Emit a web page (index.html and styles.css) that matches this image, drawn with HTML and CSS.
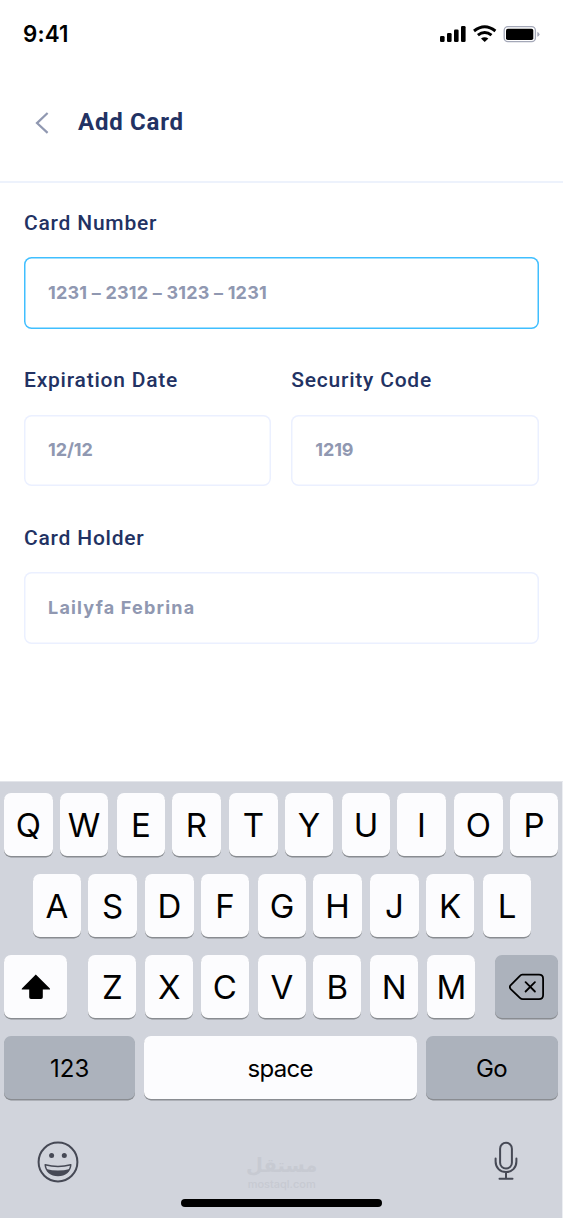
FILE: index.html
```html
<!DOCTYPE html>
<html lang="en">
<head>
<meta charset="utf-8">
<title>Add Card</title>
<link rel="stylesheet" href="styles.css">
</head>
<body>
<main class="screen">
  <div class="status">
    <span class="time">9:41</span>
    <svg class="status-icons" width="102" height="20" viewBox="0 0 102 20">
      <g fill="#000">
        <rect x="1" y="12" width="4.6" height="6" rx="1.3"/>
        <rect x="8" y="9" width="4.6" height="9" rx="1.3"/>
        <rect x="15" y="5.5" width="4.6" height="12.5" rx="1.3"/>
        <rect x="22" y="2" width="4.6" height="16" rx="1.3"/>
        <path d="M42 14.4Q45.6 12 49.4 14.4L45.7 18Z"/>
      </g>
      <path d="M35 7Q45.7-1.6 56.4 7M38.9 11.2Q45.7 5.6 52.5 11.2" fill="none" stroke="#000" stroke-width="2.9"/>
      <rect x="65.2" y="2.7" width="31.2" height="15" rx="3.7" fill="none" stroke="#a4a8b8" stroke-width="1.3"/>
      <rect x="67" y="4.7" width="27.3" height="11.3" rx="1.8"/>
      <path d="M98.3 7.7Q100.5 8.7 100.5 10.2T98.3 12.7Z" fill="#a4a8b8"/>
    </svg>
  </div>
  <header class="header">
    <svg class="back" width="16" height="24" viewBox="0 0 16 24"><path d="M13.6 2L3 12.1L13.6 21.9" fill="none" stroke="#9098b1" stroke-width="2.2"/></svg>
    <h1 class="title">Add Card</h1>
  </header>
  <form class="form">
    <div class="field">
      <div class="label">Card Number</div>
      <div class="input active"><span class="v-number">1231 – 2312 – 3123 – 1231</span></div>
    </div>
    <div class="pair">
      <div class="field">
        <div class="label">Expiration Date</div>
        <div class="input">12/12</div>
      </div>
      <div class="field">
        <div class="label">Security Code</div>
        <div class="input">1219</div>
      </div>
    </div>
    <div class="field">
      <div class="label">Card Holder</div>
      <div class="input"><span class="v-holder">Lailyfa Febrina</span></div>
    </div>
  </form>
  <section class="keyboard">
    <div class="row"><b class="key">Q</b><b class="key">W</b><b class="key">E</b><b class="key">R</b><b class="key">T</b><b class="key">Y</b><b class="key">U</b><b class="key">I</b><b class="key">O</b><b class="key">P</b></div>
    <div class="row middle"><b class="key">A</b><b class="key">S</b><b class="key">D</b><b class="key">F</b><b class="key">G</b><b class="key">H</b><b class="key">J</b><b class="key">K</b><b class="key">L</b></div>
    <div class="row lower">
      <b class="key shift"><svg width="30" height="26" viewBox="0 0 30 26"><path d="M14.8 .6L28.9 14.4Q29.5 15.6 28.3 15.6H21.8V23.2Q21.8 25 20 25H10Q8.2 25 8.2 23.2V15.6H1.4Q.2 15.6 .9 14.4Z"/></svg></b>
      <b class="key">Z</b><b class="key">X</b><b class="key">C</b><b class="key">V</b><b class="key">B</b><b class="key">N</b><b class="key">M</b>
      <b class="key dark erase"><svg width="36" height="28" viewBox="0 0 36 28" fill="none" stroke="#000" stroke-width="1.8" stroke-linecap="round" stroke-linejoin="round"><path d="M13.2 1.7H30Q34.1 1.7 34.1 5.8V22Q34.1 26.1 30 26.1H13.9Q12.2 26.1 10.9 24.8L1.5 15.8Q.2 14 1.5 12.3L10.9 2.9Q11.9 1.7 13.2 1.7ZM16.6 9.2L25.9 18.5M25.9 9.2L16.6 18.5"/></svg></b>
    </div>
    <div class="row words"><b class="key dark num">123</b><b class="key space">space</b><b class="key dark go">Go</b></div>
    <div class="tools">
      <svg width="42" height="42" viewBox="0 0 42 42" fill="none" stroke="#464955">
        <circle cx="21" cy="21" r="19.4" stroke-width="2"/>
        <circle cx="14.6" cy="14.6" r="2.5" fill="#464955" stroke="none"/>
        <circle cx="27.3" cy="14.6" r="2.5" fill="#464955" stroke="none"/>
        <path d="M9.1 28Q21 31 32.9 28Q29.2 34.5 21 34.5T9.1 28Z" fill="#464955" stroke="none"/>
        <path d="M8.2 23.8Q21 27 33.8 23.8C33.3 30.5 28 34.5 21 34.5S8.7 30.5 8.2 23.8Z" stroke-width="1.5" stroke-linejoin="round"/>
      </svg>
      <div class="watermark"><span class="arabic" lang="ar">مستقل</span><span class="domain">mostaql.com</span></div>
      <svg width="24" height="40" viewBox="0 0 24 40" fill="none" stroke="#464955" stroke-width="2" stroke-linecap="round">
        <rect x="6.1" y="1.8" width="11.8" height="25.8" rx="5.9"/>
        <path d="M1.6 17.6V20.5C1.6 26.8 6 31.1 12 31.1S22.4 26.8 22.4 20.5V17.6M12 31.1V37.5M5.5 37.7H18.5"/>
      </svg>
    </div>
    <div class="home"></div>
  </section>
</main>
</body>
</html>
```
FILE: styles.css
```css
* { box-sizing: border-box; }
body { margin: 0; background: #fff; font-family: Roboto, "Liberation Sans", sans-serif; }
.screen { width: 563px; height: 1218px; display: flex; flex-direction: column; overflow: hidden; }
.status { height: 68px; display: flex; justify-content: space-between; padding: 20px 22px 0 23px; }
.time { font: 600 22.3px/28px Inter, sans-serif; letter-spacing: .2px; color: #000; }
.status-icons { margin-top: 4px; }
.header { height: 115px; flex: none; display: flex; align-items: center; padding: 0 0 4px 34px; border-bottom: 2px solid #edf2fc; }
.title { margin: -1px 0 0 28px; font-size: 24px; line-height: 30px; font-weight: 700; letter-spacing: .75px; color: #223263; }
.form { padding: 24.5px 24.5px 0 24px; display: flex; flex-direction: column; gap: 36.5px; }
.field { height: 121px; display: flex; flex-direction: column; justify-content: space-between; }
.pair { display: grid; grid-template-columns: 1fr 1fr; gap: 20px; }
.label { font-size: 21px; line-height: 30px; font-weight: 500; letter-spacing: .78px; color: #223263; white-space: nowrap; }
.input { height: 71.5px; padding: 0 0 1px 24px; border-radius: 7.5px; box-shadow: inset 0 0 0 1.5px #ebf0ff; display: flex; align-items: center; font: 700 18px/27px Inter, sans-serif; letter-spacing: -.1px; color: #9098b1; white-space: pre; }
.input.active { box-shadow: inset 0 0 0 1.5px #40bfff; }
.v-number { letter-spacing: .2px; }
.v-holder { letter-spacing: 1.2px; }
.keyboard { margin-top: auto; height: 437px; flex: none; background: #d1d4dc; border-top: 1px solid #e3e5ea; border-right: 1px solid #eceef2; padding: 11.4px 4px 0 4.4px; }
.row { display: flex; gap: 7.5px; height: 62.5px; margin-bottom: 18.5px; }
.middle { padding-left: 28.5px; }
.key { width: 48.2px; margin-right: -.2px; height: 63px; flex: none; border-radius: 7px; background: #fcfcfe; box-shadow: 0 1.4px 0 #898c91; color: #000; font: 400 33px/65px Inter, sans-serif; text-align: center; }
.key:nth-child(odd):not(:first-child) { margin-left: 1.5px; }
.key.shift, .key.erase { width: 63px; display: flex; align-items: center; justify-content: center; }
.key.erase { padding-left: 1px; }
.lower .key:nth-child(2) { margin-left: 13.5px; }
.lower .key:nth-child(8) { margin-left: 1.5px; }
.lower .key.erase { margin-left: 12px; }
.key.dark { background: #acb2bc; }
.words { gap: 9px; }
.words .key { font-size: 24px; line-height: 66px; }
.words .key.num { width: 130.5px; }
.words .key.space { width: 273px; letter-spacing: -.65px; }
.words .key.go { width: 132px; margin-left: 0; letter-spacing: -.6px; }
.tools { display: flex; justify-content: space-between; height: 78px; padding: 24px 39.6px 0 32.6px; }
.watermark { width: 72px; margin: 13px 14px 0 4px; display: flex; flex-direction: column; align-items: center; color: #c7cad2; }
.arabic { font: 700 19.5px/23px "DejaVu Sans", sans-serif; }
.domain { font: 500 11px/14px Inter, sans-serif; }
.home { width: 201px; height: 7.5px; margin: 3.8px 0 0 177px; border-radius: 4px; background: #000; }
```
